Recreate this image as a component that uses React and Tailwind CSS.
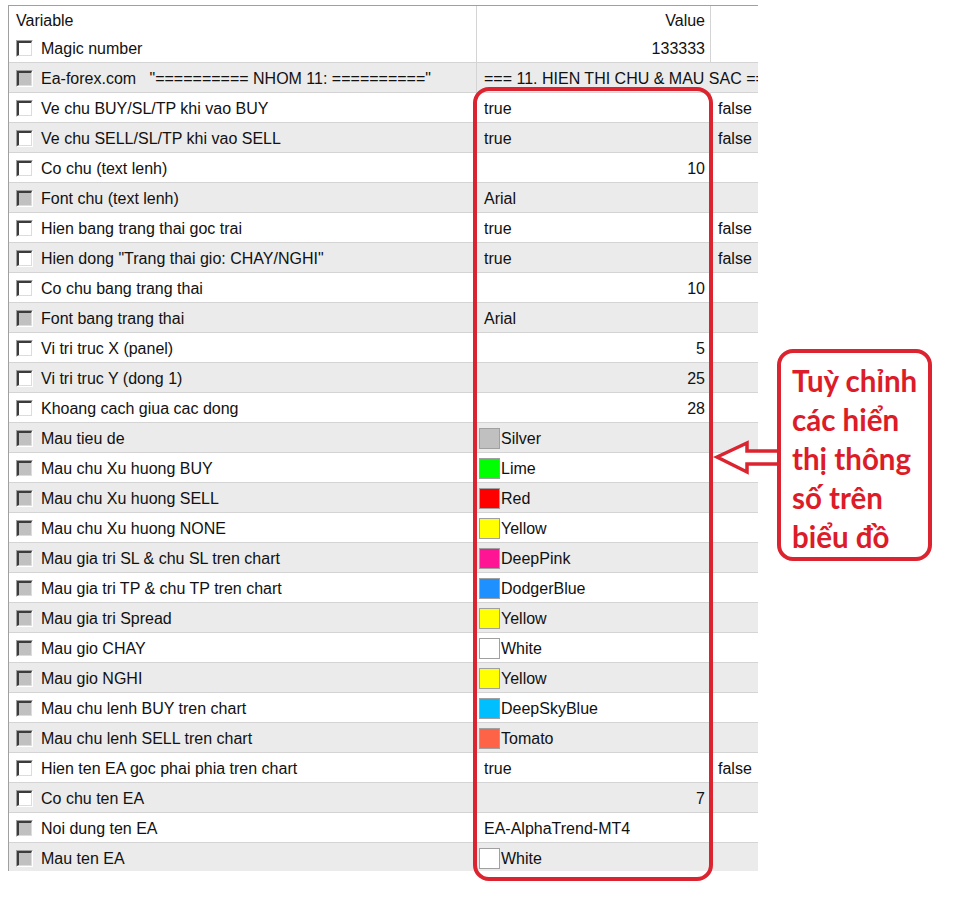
import React from 'react';

const rows = [
    { name: 'Magic number', value: '133333', align: 'right' },
    { name: 'Ea-forex.com   "========== NHOM 11: =========="', value: '=== 11. HIEN THI CHU & MAU SAC ===', locked: true, overflow: true },
    { name: 'Ve chu BUY/SL/TP khi vao BUY', value: 'true', extra: 'false' },
    { name: 'Ve chu SELL/SL/TP khi vao SELL', value: 'true', extra: 'false' },
    { name: 'Co chu (text lenh)', value: '10', align: 'right' },
    { name: 'Font chu (text lenh)', value: 'Arial', locked: true },
    { name: 'Hien bang trang thai goc trai', value: 'true', extra: 'false' },
    { name: 'Hien dong "Trang thai gio: CHAY/NGHI"', value: 'true', extra: 'false' },
    { name: 'Co chu bang trang thai', value: '10', align: 'right' },
    { name: 'Font bang trang thai', value: 'Arial', locked: true },
    { name: 'Vi tri truc X (panel)', value: '5', align: 'right' },
    { name: 'Vi tri truc Y (dong 1)', value: '25', align: 'right' },
    { name: 'Khoang cach giua cac dong', value: '28', align: 'right' },
    { name: 'Mau tieu de', value: 'Silver', color: 'bg-[#c0c0c0]', locked: true },
    { name: 'Mau chu Xu huong BUY', value: 'Lime', color: 'bg-[#00ff00]', locked: true },
    { name: 'Mau chu Xu huong SELL', value: 'Red', color: 'bg-[#ff0000]', locked: true },
    { name: 'Mau chu Xu huong NONE', value: 'Yellow', color: 'bg-[#ffff00]', locked: true },
    { name: 'Mau gia tri SL & chu SL tren chart', value: 'DeepPink', color: 'bg-[#ff1493]', locked: true },
    { name: 'Mau gia tri TP & chu TP tren chart', value: 'DodgerBlue', color: 'bg-[#1e90ff]', locked: true },
    { name: 'Mau gia tri Spread', value: 'Yellow', color: 'bg-[#ffff00]', locked: true },
    { name: 'Mau gio CHAY', value: 'White', color: 'bg-white', locked: true },
    { name: 'Mau gio NGHI', value: 'Yellow', color: 'bg-[#ffff00]', locked: true },
    { name: 'Mau chu lenh BUY tren chart', value: 'DeepSkyBlue', color: 'bg-[#00bfff]', locked: true },
    { name: 'Mau chu lenh SELL tren chart', value: 'Tomato', color: 'bg-[#ff6347]', locked: true },
    { name: 'Hien ten EA goc phai phia tren chart', value: 'true', extra: 'false' },
    { name: 'Co chu ten EA', value: '7', align: 'right' },
    { name: 'Noi dung ten EA', value: 'EA-AlphaTrend-MT4', locked: true },
    { name: 'Mau ten EA', value: 'White', color: 'bg-white', locked: true },
];

const CheckBox = ({ locked }) => (
    <span className="w-[17px] h-[17px] shrink-0 border-t border-l border-[#a0a0a0] border-r border-b border-r-white border-b-white flex">
        <span
            className={`flex-1 border-t-2 border-l-2 border-[#3c3c3c] border-r border-b border-r-[#dcdcdc] border-b-[#dcdcdc] ${locked ? 'bg-[#c0c0c0]' : 'bg-white'}`}
        />
    </span>
);

const Row = ({ row, index }) => {
    const shaded = index % 2 === 1;
    return (
        <div className={`flex h-[30px] pt-[2px] border-b border-[#d4d4d4] ${shaded ? 'bg-[#ebebeb]' : 'bg-white'}`}>
            <div className="w-[468px] shrink-0 flex items-center pl-[7px] -mt-[2px] pt-[2px] border-r border-[#d4d4d4]">
                <CheckBox locked={row.locked} />
                <span className="ml-[8px] whitespace-pre">{row.name}</span>
            </div>
            {row.overflow ? (
                <div className="flex-1 flex items-center pl-[7px] whitespace-pre overflow-hidden">{row.value}</div>
            ) : (
                <>
                    <div
                        className={`w-[234px] shrink-0 flex items-center -mt-[2px] pt-[2px] border-r border-[#d4d4d4] ${
                            row.align === 'right' ? 'justify-end pr-[5px]' : row.color ? 'pl-[2px]' : 'pl-[7px]'
                        }`}
                    >
                        {row.color && (
                            <span className={`w-[21px] h-[21px] mr-[1px] border border-[#a0a0a0] ${row.color}`} />
                        )}
                        <span>{row.value}</span>
                    </div>
                    <div className="flex-1 flex items-center pl-[7px]">{row.extra}</div>
                </>
            )}
        </div>
    );
};

const App = () => {
    return (
        <div className="relative w-[959px] h-[902px] bg-white overflow-hidden font-['Liberation_Sans',Arial,sans-serif] text-[16px] text-[#111]">
            <div className="ml-[8px] mt-[5px] w-[750px] h-[866px] overflow-hidden border-t border-l border-[#a0a0a0]">
                <div className="flex h-[27px] pt-[2px] bg-white">
                    <div className="w-[468px] shrink-0 flex items-center pl-[7px] -mt-[2px] pt-[2px] border-r border-[#d4d4d4]">Variable</div>
                    <div className="w-[234px] shrink-0 flex items-center justify-end pr-[5px] -mt-[2px] pt-[2px] border-r border-[#d4d4d4]">Value</div>
                    <div className="flex-1" />
                </div>
                {rows.map((row, i) => (
                    <Row key={i} row={row} index={i} />
                ))}
            </div>

            {/* red highlight around the value column */}
            <div className="absolute left-[473px] top-[87px] w-[240px] h-[794px] border-[4px] border-[#dc2430] rounded-[16px]" />

            {/* arrow pointing at the value column */}
            <svg className="absolute left-[712px] top-[438px]" width="70" height="40" viewBox="0 0 70 40">
                <polygon
                    points="5,19 35,5 35,13 68,13 68,26 35,26 35,34"
                    fill="white"
                    stroke="#dc2430"
                    strokeWidth="3.5"
                    strokeLinejoin="miter"
                />
            </svg>

            {/* callout */}
            <div className="absolute left-[777px] top-[349px] w-[155px] h-[212px] border-[4px] border-[#dc2430] rounded-[16px] bg-white pl-[11px] pt-[8px]">
                <p className="font-['Lato',sans-serif] font-bold text-[29.5px] leading-[39px] text-[#dc1c28] whitespace-nowrap">
                    Tuỳ chỉnh
                    <br />
                    các hiển
                    <br />
                    thị thông
                    <br />
                    số trên
                    <br />
                    biểu đồ
                </p>
            </div>
        </div>
    );
};

export default App;
